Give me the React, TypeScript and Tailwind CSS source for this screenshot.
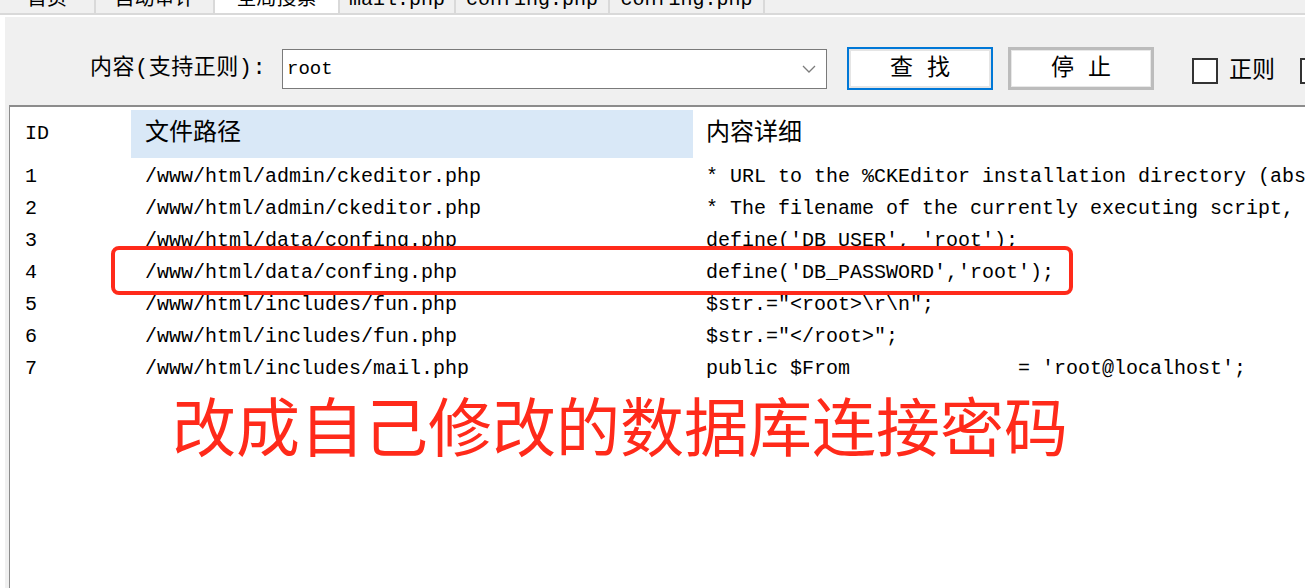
import React from "react";

const MONO = { fontFamily: '"Liberation Mono", "Noto Sans CJK SC", monospace' } as React.CSSProperties;

const tabs = [
  { label: "首页", w: 96, active: false },
  { label: "自动审计", w: 119, active: false },
  { label: "全局搜索", w: 125, active: true },
  { label: "mail.php", w: 116, active: false },
  { label: "confing.php", w: 154, active: false },
  { label: "confing.php", w: 155, active: false },
];

const rows: [string, string, string][] = [
  ["1", "/www/html/admin/ckeditor.php", "* URL to the %CKEditor installation directory (absolute or relative to document root)."],
  ["2", "/www/html/admin/ckeditor.php", "* The filename of the currently executing script, relative to the document root."],
  ["3", "/www/html/data/confing.php", "define('DB_USER', 'root');"],
  ["4", "/www/html/data/confing.php", "define('DB_PASSWORD','root');"],
  ["5", "/www/html/includes/fun.php", "$str.=\"<root>\\r\\n\";"],
  ["6", "/www/html/includes/fun.php", "$str.=\"</root>\";"],
  ["7", "/www/html/includes/mail.php", "public $From              = 'root@localhost';"],
];

export default function App() {
  return (
    <div
      className="relative w-[1305px] h-[588px] overflow-hidden bg-white text-black"
      style={MONO}
    >
      {/* tab strip (cut off at top) */}
      <div className="h-[15px] overflow-hidden bg-[#f0f0f0] border-b-2 border-[#d9d9d9]">
        <div className="flex -mt-[14px]">
          {tabs.map((t, i) => (
            <div
              key={i}
              className={`h-[28px] shrink-0 flex items-center justify-center border-r-2 border-[#d9d9d9] text-[20px] leading-[20px] ${
                t.active ? "bg-white" : "bg-[#f0f0f0]"
              }`}
              style={{ width: t.w }}
            >
              {t.label}
            </div>
          ))}
        </div>
      </div>

      <div className="h-[2px] bg-white" />

      {/* main panel */}
      <div className="ml-[5px] h-[571px] bg-[#f0f0f0] flex flex-col">
        {/* toolbar */}
        <div className="h-[88px] shrink-0 pt-[30px] pl-[85px]">
          <div className="h-[43px] flex items-center whitespace-nowrap">
            <div className="w-[192px] text-[22px] leading-[24px] shrink-0 tracking-[0.5px]">内容(支持正则):</div>
            <div className="w-[545px] h-[40px] shrink-0 bg-white border border-[#7a7a7a] flex items-center pl-[4px] pr-[10px]">
              <span className="flex-1 text-[19px] leading-[22px]">root</span>
              <svg width="14" height="8" viewBox="0 0 14 8" className="mt-[1px]">
                <path d="M1 1 L7 7 L13 1" fill="none" stroke="#7c7c7c" strokeWidth="1.3" />
              </svg>
            </div>
            <button className="ml-[20px] w-[146px] h-[43px] shrink-0 bg-white border-2 border-[#0078d7] shadow-[inset_0_0_0_2px_#e5e5e5] text-[23px] leading-[24px] flex items-center justify-center">
              查 找
            </button>
            <button className="ml-[15px] w-[146px] h-[43px] shrink-0 bg-white border-[3px] border-[#bcbcbc] shadow-[inset_0_0_0_1px_#e8e8e8] text-[23px] leading-[24px] flex items-center justify-center">
              停 止
            </button>
            <div className="ml-[38px] mt-[5px] w-[26px] h-[26px] shrink-0 bg-white border-2 border-[#333333]" />
            <span className="ml-[11px] mt-[4px] text-[23px] leading-[24px]">正则</span>
            <div className="ml-[25px] mt-[5px] w-[26px] h-[26px] shrink-0 bg-white border-2 border-[#333333]" />
          </div>
        </div>

        {/* list */}
        <div className="ml-[4px] flex-1 bg-white border-t-2 border-l border-[#8c8c8c] pt-[3px] whitespace-nowrap">
          <div className="flex h-[48px] items-center">
            <div className="w-[121px] pl-[15px] text-[20px] shrink-0">ID</div>
            <div className="w-[562px] h-full bg-[#d9e8f7] pl-[14px] flex items-center text-[24px] shrink-0">文件路径</div>
            <div className="pl-[13px] text-[24px]">内容详细</div>
          </div>
          <div className="pt-[3px]">
            {rows.map(([id, path, content]) => (
              <div key={id} className="flex h-[32px] items-center text-[20px] leading-[24px]">
                <div className="w-[121px] pl-[15px] shrink-0">{id}</div>
                <div className="w-[562px] pl-[14px] shrink-0">{path}</div>
                <div className="pl-[13px] whitespace-pre">{content}</div>
              </div>
            ))}
          </div>
          <div
            className="mt-[3px] pl-[162px] text-[64px] leading-[70px] text-[#ff2a1a]"
            style={{ fontFamily: '"Noto Sans CJK SC", sans-serif' }}
          >
            改成自己修改的数据库连接密码
          </div>
        </div>
      </div>

      {/* red highlight box */}
      <div className="absolute left-[111px] top-[246px] w-[962px] h-[49px] border-4 border-[#ff2a1a] rounded-[8px]" />
    </div>
  );
}
